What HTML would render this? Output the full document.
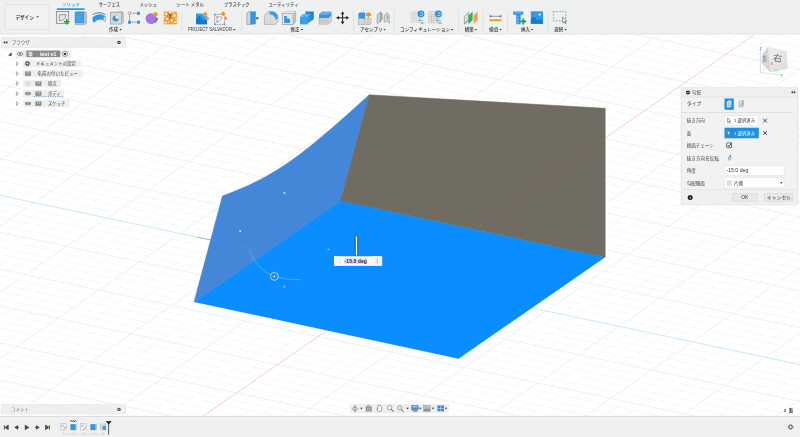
<!DOCTYPE html>
<html lang="ja"><head><meta charset="utf-8"><title>Fusion</title>
<style>
html,body{margin:0;padding:0;background:#fff}
body{width:800px;height:437px;overflow:hidden;position:relative}
#wrap{position:absolute;left:0;top:0;width:800px;height:437px;will-change:transform}
svg{position:absolute;left:0;top:0;font-family:'Liberation Sans','Noto Sans CJK JP',sans-serif}
</style></head><body>
<div id="wrap">
<svg width="800" height="437" viewBox="0 0 800 437">
<rect width="800" height="437" fill="#fff"/>
<g id="grid">
<path d="M0 -129.3L800 39.9M0 -121.9L800 47.3M0 -114.6L800 54.6M0 -107.2L800 62.0M0 -92.4L800 76.8M0 -85.0L800 84.2M0 -77.7L800 91.5M0 -70.3L800 98.9M0 -55.5L800 113.7M0 -48.1L800 121.1M0 -40.8L800 128.4M0 -33.4L800 135.8M0 -18.6L800 150.6M0 -11.2L800 158.0M0 -3.9L800 165.3M0 3.5L800 172.7M0 18.3L800 187.5M0 25.7L800 194.9M0 33.0L800 202.2M0 40.4L800 209.6M0 55.2L800 224.4M0 62.6L800 231.8M0 69.9L800 239.1M0 77.3L800 246.5M0 92.1L800 261.3M0 99.5L800 268.7M0 106.8L800 276.0M0 114.2L800 283.4M0 129.0L800 298.2M0 136.4L800 305.6M0 143.7L800 312.9M0 151.1L800 320.3M0 165.9L800 335.1M0 173.3L800 342.5M0 180.6L800 349.8M0 188.0L800 357.2M0 202.8L800 372.0M0 210.2L800 379.4M0 217.5L800 386.7M0 224.9L800 394.1M0 239.7L800 408.9M0 247.1L800 416.3M0 254.4L800 423.6M0 261.8L800 431.0M0 276.6L800 445.8M0 284.0L800 453.2M0 291.3L800 460.5M0 298.7L800 467.9M0 313.5L800 482.7M0 320.9L800 490.1M0 328.2L800 497.4M0 335.6L800 504.8M0 350.4L800 519.6M0 357.8L800 527.0M0 365.1L800 534.3M0 372.5L800 541.7M0 387.3L800 556.5M0 394.7L800 563.9M0 402.0L800 571.2M0 409.4L800 578.6M-541.7 416L16.1 30M-522.6 416L35.2 30M-503.5 416L54.3 30M-484.4 416L73.4 30M-446.2 416L111.6 30M-427.1 416L130.7 30M-408.0 416L149.8 30M-388.9 416L168.9 30M-350.7 416L207.1 30M-331.6 416L226.2 30M-312.5 416L245.3 30M-293.4 416L264.4 30M-255.2 416L302.6 30M-236.1 416L321.7 30M-217.0 416L340.8 30M-197.9 416L359.9 30M-159.7 416L398.1 30M-140.6 416L417.2 30M-121.5 416L436.3 30M-102.4 416L455.4 30M-64.2 416L493.6 30M-45.1 416L512.7 30M-26.0 416L531.8 30M-6.9 416L550.9 30M31.3 416L589.1 30M50.4 416L608.2 30M69.5 416L627.3 30M88.6 416L646.4 30M126.8 416L684.6 30M145.9 416L703.7 30M165.0 416L722.8 30M184.1 416L741.9 30M222.3 416L780.1 30M241.4 416L799.2 30M260.5 416L818.3 30M279.6 416L837.4 30M317.8 416L875.6 30M336.9 416L894.7 30M356.0 416L913.8 30M375.1 416L932.9 30M413.3 416L971.1 30M432.4 416L990.2 30M451.5 416L1009.3 30M470.6 416L1028.4 30M508.8 416L1066.6 30M527.9 416L1085.7 30M547.0 416L1104.8 30M566.1 416L1123.9 30M604.3 416L1162.1 30M623.4 416L1181.2 30M642.5 416L1200.3 30M661.6 416L1219.4 30M699.8 416L1257.6 30M718.9 416L1276.7 30M738.0 416L1295.8 30M757.1 416L1314.9 30M795.3 416L1353.1 30" stroke="#f5f5f5" stroke-width="0.7" fill="none"/>
<path d="M0 -136.7L800 32.5M0 -99.8L800 69.4M0 -62.9L800 106.3M0 -26.0L800 143.2M0 10.9L800 180.1M0 47.8L800 217.0M0 84.7L800 253.9M0 121.6L800 290.8M0 158.5L800 327.7M0 232.3L800 401.5M0 269.2L800 438.4M0 306.1L800 475.3M0 343.0L800 512.2M0 379.9L800 549.1M0 416.8L800 586.0M-465.3 416L92.5 30M-369.8 416L188.0 30M-274.3 416L283.5 30M-178.8 416L379.0 30M-83.3 416L474.5 30M12.2 416L570.0 30M107.7 416L665.5 30M298.7 416L856.5 30M394.2 416L952.0 30M489.7 416L1047.5 30M585.2 416L1143.0 30M680.7 416L1238.5 30M776.2 416L1334.0 30" stroke="#ececec" stroke-width="0.8" fill="none"/>
<path d="M0 195.4L800 364.6" stroke="#b9efc0" stroke-width="0.8" fill="none"/>
<path d="M203.2 416L753.8 35" stroke="#f7c2c2" stroke-width="0.8" fill="none"/>
</g>
<g id="model">

<polygon points="194,302 458.6,358.7 605.2,257.2 340.5,200.8" fill="#0a8dff"/>
<polygon points="194.6,301.5 340.5,200.8 604.6,257 604.6,250 340.5,195 200,290" fill="#0a8dff"/>
<path d="M194 302L222.4 196C276.3 176.2 301.7 156.2 369.2 94.8L340.5 200.8Z" fill="#4487d9" stroke="#4487d9" stroke-width="0.5" stroke-linejoin="round"/>
<polygon points="369.2,94.8 605.2,108.3 605.2,257.2 340.5,200.8" fill="#706c61" stroke="#706c61" stroke-width="0.5" stroke-linejoin="round"/>
<path d="M474.4 229.3L605.2 138.8" stroke="#8c7266" stroke-width="0.6" fill="none"/>
<path d="M197 237.1L266 251.7" stroke="#5391e0" stroke-width="0.5" fill="none"/>
<!-- manipulators -->
<path d="M249.2 249.5Q256.5 270.5 274.3 276.4Q288 280.6 300.7 279.6" stroke="#8fbdf0" stroke-width="0.5" fill="none"/>
<circle cx="274.4" cy="276.4" r="3.9" fill="#1580dc" stroke="#dcecfb" stroke-width="0.8"/>
<circle cx="274.4" cy="276.4" r="2.4" fill="#1d94f2"/>
<circle cx="274.4" cy="276.4" r="0.8" fill="#fff"/>
<rect x="283.6" y="192.2" width="1.6" height="1.6" fill="#dfe8f2"/>
<rect x="239.4" y="230.4" width="1.6" height="1.6" fill="#dfe8f2"/>
<rect x="327.6" y="248.4" width="2" height="1.2" fill="#9cc3ee" transform="rotate(25 328 249)"/>
<rect x="283.8" y="285.6" width="1" height="2" fill="#dfe8f2"/>
<path d="M355.3 256V237Q356.5 234.6 357.7 237V256Z" fill="#fff" stroke="#222" stroke-width="0.7"/>
<rect x="334.1" y="256.3" width="48" height="9.5" fill="#fff"/>
<rect x="334.1" y="256.3" width="7" height="9.5" fill="#f1f1f1"/><rect x="371.4" y="256.3" width="10.7" height="9.5" fill="#f3f3f3"/>
<path d="M336 256.4v9.3M338.4 256.4v9.3M373.6 256.4v9.3" stroke="#fff" stroke-width="0.7"/>
<path d="M334.1 257.1H382.1M334.1 264.9H382.1" stroke="#f6d5dc" stroke-width="0.4" stroke-dasharray="0.8 0.8"/>
<rect x="344.2" y="258.3" width="23.2" height="5.6" fill="#e2d6f6"/>
<text x="344.6" y="262.8" font-size="5" font-weight="bold" fill="#2d2838" textLength="22.4" lengthAdjust="spacingAndGlyphs">-15.0 deg</text>
<path d="M377.3 258.6v0.9M377.3 260.4v0.9M377.3 262.2v0.9" stroke="#666" stroke-width="0.7"/>

</g>
<g id="viewcube">
<g>
<defs><linearGradient id="cg" x1="0" y1="0" x2="1" y2="1"><stop offset="0" stop-color="#efefef"/><stop offset="1" stop-color="#dcdcdc"/></linearGradient></defs>
<path d="M768.3 46.4L786.9 51.2L787.4 68.9L770.8 72.6Z" fill="url(#cg)"/>
<path d="M768.3 46.4L770.8 72.6L761.6 63.6L762 54.4Z" fill="#d6d6d6"/>
<path d="M768.3 46.4L770.8 72.6" stroke="#ececec" stroke-width="0.5"/>
<text x="773.2" y="61.4" font-size="9" fill="#6a6a6a" transform="rotate(8 778 58)">右</text>
<text x="762.6" y="61.4" font-size="7" fill="#7a7a7a" transform="translate(763,0) scale(0.55,1) translate(-763,0)">前</text>
<text x="774.5" y="71.8" font-size="3" fill="#b0b0b0" transform="rotate(-10 777 70)">下</text>
<path d="M760.4 72.4V49.8" stroke="#a8c0f2" stroke-width="0.55"/>
<path d="M760.4 72.6L781 74.8" stroke="#a5e3ad" stroke-width="0.55"/>
<path d="M760.4 72.4L771 64.8" stroke="#f3a5a5" stroke-width="0.6" stroke-dasharray="0.8 0.8"/>
<text x="759.6" y="49.8" font-size="3.6" font-weight="bold" fill="#4b78e8">Z</text>
<text x="780.4" y="77" font-size="3.6" font-weight="bold" fill="#3cc259">Y</text>
<text x="770.4" y="65.4" font-size="3.6" font-weight="bold" fill="#f06a6a">X</text>
</g>
</g>
<g id="toolbar">
<rect x="0" y="0" width="800" height="32.8" fill="#eff0f0"/>
<rect x="0" y="32.8" width="800" height="1.2" fill="#e7e8e8"/>
<rect x="0" y="34" width="800" height="0.7" fill="#edeeee"/>
<rect x="4.7" y="4.7" width="44.6" height="24.6" rx="1.6" fill="#f1f2f2" stroke="#d6d7d7" stroke-width="0.6"/>
<text x="15.50" y="18.60" font-size="5.00" fill="#333" font-weight="bold" textLength="18.25" lengthAdjust="spacingAndGlyphs">デザイン</text>
<path d="M36.15 16.16H38.85L37.50 17.84Z" fill="#444"/>
<text x="62.00" y="6.26" font-size="4.60" fill="#1e94e6" font-weight="500" textLength="18.00" lengthAdjust="spacingAndGlyphs">ソリッド</text>
<rect x="56.8" y="8.3" width="27.8" height="1.6" fill="#1e90e4"/>
<text x="98.70" y="6.26" font-size="4.60" fill="#484848" font-weight="500" textLength="21.30" lengthAdjust="spacingAndGlyphs">サーフェス</text>
<text x="139.50" y="6.26" font-size="4.60" fill="#484848" font-weight="500" textLength="17.50" lengthAdjust="spacingAndGlyphs">メッシュ</text>
<text x="176.50" y="6.26" font-size="4.60" fill="#484848" font-weight="500" textLength="27.50" lengthAdjust="spacingAndGlyphs">シート メタル</text>
<text x="224.00" y="6.26" font-size="4.60" fill="#484848" font-weight="500" textLength="25.50" lengthAdjust="spacingAndGlyphs">プラスチック</text>
<text x="268.50" y="6.26" font-size="4.60" fill="#484848" font-weight="500" textLength="30.00" lengthAdjust="spacingAndGlyphs">ユーティリティ</text>
<text x="109.00" y="31.18" font-size="4.40" fill="#2e2e2e" font-weight="500" textLength="9.00" lengthAdjust="spacingAndGlyphs">作成</text>
<path d="M119.35 28.93H121.85L120.60 30.47Z" fill="#333"/>
<text x="188.00" y="31.46" font-size="5.30" fill="#3a3a3a" font-weight="normal" textLength="44.00" lengthAdjust="spacingAndGlyphs">PROJECT SALVADOR</text>
<path d="M233.15 28.99H235.45L234.30 30.41Z" fill="#333"/>
<text x="290.50" y="31.18" font-size="4.40" fill="#2e2e2e" font-weight="500" textLength="9.00" lengthAdjust="spacingAndGlyphs">修正</text>
<path d="M300.75 28.93H303.25L302.00 30.47Z" fill="#333"/>
<text x="360.00" y="31.18" font-size="4.40" fill="#2e2e2e" font-weight="500" textLength="22.50" lengthAdjust="spacingAndGlyphs">アセンブリ</text>
<path d="M383.35 28.99H385.65L384.50 30.41Z" fill="#333"/>
<text x="400.00" y="31.18" font-size="4.40" fill="#2e2e2e" font-weight="500" textLength="50.10" lengthAdjust="spacingAndGlyphs">コンフィギュレーション</text>
<path d="M450.95 28.99H453.25L452.10 30.41Z" fill="#333"/>
<text x="464.75" y="31.18" font-size="4.40" fill="#2e2e2e" font-weight="500" textLength="9.00" lengthAdjust="spacingAndGlyphs">構築</text>
<path d="M474.65 29.02H476.85L475.75 30.38Z" fill="#333"/>
<text x="489.00" y="31.18" font-size="4.40" fill="#2e2e2e" font-weight="500" textLength="9.50" lengthAdjust="spacingAndGlyphs">検査</text>
<path d="M499.45 29.02H501.65L500.55 30.38Z" fill="#333"/>
<text x="521.00" y="31.18" font-size="4.40" fill="#2e2e2e" font-weight="500" textLength="9.00" lengthAdjust="spacingAndGlyphs">挿入</text>
<path d="M530.95 29.02H533.15L532.05 30.38Z" fill="#333"/>
<text x="554.25" y="31.18" font-size="4.40" fill="#2e2e2e" font-weight="500" textLength="9.00" lengthAdjust="spacingAndGlyphs">選択</text>
<path d="M564.45 28.96H566.85L565.65 30.44Z" fill="#333"/>
<rect x="181.5" y="11" width="0.7" height="20.5" fill="#dcdddd"/>
<rect x="241.5" y="11" width="0.7" height="20.5" fill="#dcdddd"/>
<rect x="353.4" y="11" width="0.7" height="20.5" fill="#dcdddd"/>
<rect x="393.8" y="11" width="0.7" height="20.5" fill="#dcdddd"/>
<rect x="458.0" y="11" width="0.7" height="20.5" fill="#dcdddd"/>
<rect x="482.8" y="11" width="0.7" height="20.5" fill="#dcdddd"/>
<rect x="507.3" y="11" width="0.7" height="20.5" fill="#dcdddd"/>
<rect x="547.8" y="11" width="0.7" height="20.5" fill="#dcdddd"/>

<!-- 1 create sketch -->
<g>
<rect x="56.5" y="11.6" width="12.2" height="11.8" fill="#f1f1f1" stroke="#7a7a7a" stroke-width="0.7"/>
<rect x="57.5" y="12.6" width="10.2" height="9.8" fill="none" stroke="#dcdcdc" stroke-width="0.5"/>
<path d="M59.3 14.7H66Q65.6 20.4 59.3 21Z" fill="#e6e6e6" stroke="#666" stroke-width="0.6"/>
<path d="M66.7 18.9v5.6M63.9 21.7h5.6" stroke="#12a73b" stroke-width="1.6"/>
</g>
<!-- 2 extrude -->
<g>
<path d="M76.5 11.8H85.5L86.4 12.8V23.2L84.5 24.6H75.2Z" fill="#bdbdbd" stroke="#777" stroke-width="0.4"/>
<rect x="74.8" y="11.8" width="9.2" height="11.2" fill="#2f97e6"/>
<rect x="76" y="13" width="7" height="9" fill="#4aa6ee" opacity="0.8"/>
</g>
<!-- 3 revolve -->
<g>
<path d="M92.5 14.6Q99 10.8 105.5 14.6" stroke="#555" stroke-width="0.8" fill="none"/>
<path d="M92.6 17.2Q99 11.8 105.6 16.6V21.4Q99 16.8 94 22.8L92.6 21Z" fill="#2f97e6"/>
<ellipse cx="104.6" cy="19.2" rx="1.2" ry="2.4" fill="#d8d8d8" stroke="#888" stroke-width="0.3"/>
</g>
<!-- 4 hole -->
<g>
<path d="M110.6 12.4L121.6 11.4L123.4 12.4V22.6L121.6 24H110.6Z" fill="#c4c4c4" stroke="#888" stroke-width="0.4"/>
<rect x="110.6" y="12.4" width="10.8" height="11.6" fill="#d9d9d9" stroke="#8a8a8a" stroke-width="0.4"/>
<circle cx="115.6" cy="18.6" r="3.3" fill="#f4f4f4" stroke="#999" stroke-width="0.3"/>
<path d="M115.6 18.6V15.6A3 3 0 1 0 118.6 18.6Z" fill="#2f97e6"/>
</g>
<!-- 5 pattern -->
<g>
<path d="M129.5 13.2H138.5M129.5 13.2V22.2H138.5" stroke="#6a6a6a" stroke-width="0.5" fill="none"/>
<circle cx="129.5" cy="13.2" r="1.3" fill="#fff" stroke="#555" stroke-width="0.5"/>
<rect x="137" y="11.8" width="3" height="3" fill="#2f9be8"/>
<rect x="128" y="20.7" width="3" height="3" fill="#2f9be8"/>
<rect x="137" y="20.7" width="3" height="3" fill="#2f9be8"/>
</g>
<!-- 6 purple -->
<g>
<circle cx="151" cy="18.6" r="5.4" fill="#a774e0"/>
<path d="M156.6 17.5L158.4 18.5L155.5 23L154.4 22.4Z" fill="#4a6fe0"/>
<path d="M155.4 11.6L158.2 14.6L155.4 17.6L152.6 14.6Z" fill="#f7941d"/>
</g>
<!-- 7 orange texture -->
<g>
<rect x="163.8" y="11.6" width="13.2" height="12.8" fill="#f7a23a"/>
<path d="M165 13h2v2h-2zM169 12h3v1.5h-3zM173.5 14h2v3h-2zM166 18h2.5v2h-2.5zM171 19h2v3h-2zM174.5 21h2v2h-2zM164.5 22h2v1.5h-2zM172.4 12.4h1.4v1h-1.4zM175.4 18h1.4v1.4h-1.4zM167.6 21.4h2v1.4h-2zM164.2 16h1.2v1.4h-1.2zM170.6 16.4h1.4v1.2h-1.4z" fill="#fdebd2"/>
<path d="M168.6 13.2l1.4 3l-1 3.2M171.4 13l-0.8 3.4l1.2 2" stroke="#5e5048" stroke-width="0.9" fill="none"/>
<path d="M166.4 15.6h1v1h-1zM173 20h1v1h-1zM169.4 22.6h1v1h-1z" fill="#8a6a4a"/>
</g>
<!-- 8 salvador image -->
<g>
<rect x="196" y="13.6" width="11" height="10.6" fill="#2f9be8"/>
<path d="M196 24.2V19.2L199.4 15.8L203.2 20.4L205 18.8L207 20.8V24.2Z" fill="#1478cf"/>
<path d="M205.20 11.20L206.32 12.88L208.00 14.00L206.32 15.12L205.20 16.80L204.08 15.12L202.40 14.00L204.08 12.88Z" fill="#f7941d" stroke="#f3f4f4" stroke-width="0.6" paint-order="stroke"/>
<path d="M207.60 16.30L208.44 17.56L209.70 18.40L208.44 19.24L207.60 20.50L206.76 19.24L205.50 18.40L206.76 17.56Z" fill="#f58a4a" stroke="#f3f4f4" stroke-width="0.6" paint-order="stroke"/>
<path d="M203 12.6L204 14.6" stroke="#eff0f0" stroke-width="0.1"/>
</g>
<!-- 9 salvador sketch -->
<g>
<rect x="214.8" y="14.4" width="9.6" height="9.8" fill="#f0f0f0" stroke="#8a8a8a" stroke-width="0.55"/>
<path d="M217 22V17H222Q221.5 21 217 22Z" fill="#f8f8f8" stroke="#777" stroke-width="0.5"/>
<rect x="214" y="13.8" width="1.6" height="1.6" fill="#2f9be8"/><rect x="214" y="23.4" width="1.6" height="1.6" fill="#2f9be8"/><rect x="223.6" y="23.4" width="1.6" height="1.6" fill="#2f9be8"/>
<rect x="216.6" y="16.4" width="1.2" height="1.2" fill="#2f9be8"/><rect x="216.6" y="21.2" width="1.2" height="1.2" fill="#2f9be8"/>
<path d="M223.20 11.00L224.32 12.68L226.00 13.80L224.32 14.92L223.20 16.60L222.08 14.92L220.40 13.80L222.08 12.68Z" fill="#f7941d" stroke="#f3f4f4" stroke-width="0.6" paint-order="stroke"/>
<path d="M225.60 16.30L226.44 17.56L227.70 18.40L226.44 19.24L225.60 20.50L224.76 19.24L223.50 18.40L224.76 17.56Z" fill="#f58a4a" stroke="#f3f4f4" stroke-width="0.6" paint-order="stroke"/>
</g>
<!-- 10 press pull -->
<g>
<path d="M246.8 13.4Q248 11.6 251 11.4V24.4H246.8Z" fill="#d6d6d6" stroke="#777" stroke-width="0.5"/>
<path d="M250.4 11.6H255.8V23.4L254.4 24.4H250.4Z" fill="#2f97e6"/>
<path d="M255.8 17.8H257L258.6 18.2L257 19.4Z" fill="#333"/>
<path d="M256.4 17.6H258.8L257.6 19.2Z" fill="#333"/>
</g>
<!-- 11 fillet -->
<g>
<path d="M264.4 15.4L267.8 11.6H272A6 6 0 0 1 278 17.6V21.4L275.2 24.4H264.4Z" fill="#dadada" stroke="#909090" stroke-width="0.5"/>
<path d="M269.8 11.6H272A6 6 0 0 1 278 17.6V18.6L275.4 19.8A5 5 0 0 0 270.4 14.6L269.2 14.4Z" fill="#3a9fea"/>
</g>
<!-- 12 shell -->
<g>
<path d="M282.4 13.6L285 11.4H295.6V22L293 24.4H282.4Z" fill="#c8c8c8" stroke="#8c8c8c" stroke-width="0.45"/>
<path d="M282.4 13.6L285 11.4H295.6L293 13.6Z" fill="#ececec"/>
<rect x="282.4" y="13.6" width="10.6" height="10.8" fill="#e6e6e6" stroke="#8c8c8c" stroke-width="0.45"/>
<path d="M284.2 16H286.8V18.8H290V23H284.2Z" fill="#2f97e6"/>
</g>
<!-- 13 combine -->
<g>
<path d="M305.4 11.6H313.8V19L311.8 20.8H305.4Z" fill="#1f86d8"/>
<path d="M302.6 14.2H310.6V21.6L308.6 23H302.6Z" fill="#2b92e2"/>
<path d="M300 16.8H308V24.4H300Z" fill="#3aa0ec"/>
<path d="M300 16.8L302.6 14.2H310.6L308 16.8Z" fill="#62b6f4"/>
</g>
<!-- 14 offset face -->
<g>
<path d="M319 14.2L322 11.4H331.4L328.6 14.2Z" fill="#5ab2f3"/>
<path d="M319 14.2H328.6L331.4 11.4V15.2L328.6 18H319Z" fill="#2f97e6"/>
<path d="M319 18H328.6L331.4 15.4V21.2L328.6 24.2H319Z" fill="#d6d6d6" stroke="#888" stroke-width="0.4"/>
<path d="M319 20H328.6M319 22H328.6" stroke="#999" stroke-width="0.4"/>
</g>
<!-- 15 move -->
<g fill="#222" stroke="#222">
<path d="M342.6 13V22.6M337.8 17.8H347.4" stroke-width="1" fill="none"/>
<path d="M342.6 11.2L344.4 14.2H340.8ZM342.6 24.4L344.4 21.4H340.8ZM336 17.8L339 16V19.6ZM349.2 17.8L346.2 16V19.6Z" stroke="none"/>
</g>
<!-- 16 new component -->
<g>
<path d="M358.4 18.4H371V23.8L370 24.6H358.4Z" fill="#d6d6d6" stroke="#888" stroke-width="0.4"/>
<path d="M364.4 18.4V24.4M368 18.4V24.4" stroke="#999" stroke-width="0.4"/>
<path d="M358.4 13.6L359.6 12.6H365.2V18.4H358.4Z" fill="#2f97e6"/>
<circle cx="368.4" cy="14.6" r="2.1" fill="#f7941d" stroke="#f3f4f4" stroke-width="0.5"/><path d="M368.4 11.4L369.2 13.4L371.2 12.6L370.4 14.6L371.6 15.8L369.6 16L368.4 17.8L367.2 16L365.2 15.8L366.4 14.6L365.6 12.6L367.6 13.4Z" fill="#f7941d"/>
</g>
<!-- 17 joint -->
<g>
<path d="M377.2 14.8L380.6 12V21.6L377.2 23.4Z" fill="#cfcfcf" stroke="#777" stroke-width="0.5"/>
<path d="M380.6 12L382.4 13.6V19L380.6 21.6Z" fill="#b5b5b5" stroke="#777" stroke-width="0.4"/>
<path d="M384.2 16L386.8 12.6L389.2 15.4V23.2L386.4 20.6L384.2 22.4Z" fill="#d9d9d9" stroke="#777" stroke-width="0.5"/>
<path d="M386.8 14.6L388 16V19.4L386.8 18.2Z" fill="#6ab2ea"/>
</g>
<!-- 18 config -->
<g>
<path d="M410.8 13L412.6 11.4H420.8V22.4H410.8Z" fill="#dedede" stroke="#cfcfcf" stroke-width="0.3"/>
<circle cx="421" cy="14" r="3.4" fill="#1f93e6"/>
<path d="M419.6 14.6A1.6 1.6 0 1 0 421.4 12.6M421.4 12.6l-0.9-0.5M421.4 12.6l-0.5 0.9" stroke="#fff" stroke-width="0.6" fill="none"/>
<path d="M418.6 20.4H423.4M420 23H424.4M422.2 21.8V24.2" stroke="#777" stroke-width="0.5"/>
<rect x="419" y="19.8" width="1.2" height="1.2" fill="#4aa6ee"/>
</g>
<!-- 19 config table -->
<g>
<rect x="428.8" y="11.4" width="10.2" height="11.6" fill="#e4e4e4" stroke="#b8b8b8" stroke-width="0.4"/>
<path d="M428.8 14H439M428.8 16.4H439M428.8 18.8H439M428.8 21H439M431.4 14V23M434 14V23M436.6 14V23" stroke="#b0b0b0" stroke-width="0.4"/>
<circle cx="438.4" cy="14" r="3.4" fill="#1f93e6"/>
<path d="M437 14.6A1.6 1.6 0 1 0 438.8 12.6M438.8 12.6l-0.9-0.5M438.8 12.6l-0.5 0.9" stroke="#fff" stroke-width="0.6" fill="none"/>
<path d="M436.4 20.4H441.2M437.8 23H442.2M440 21.8V24.2" stroke="#777" stroke-width="0.5"/>
<rect x="436.8" y="19.8" width="1.2" height="1.2" fill="#4aa6ee"/>
</g>
<!-- 20 construct -->
<g>
<path d="M464.4 16.6L468.4 12V20.4L464.4 24Z" fill="#e0e0e0" stroke="#777" stroke-width="0.5"/>
<path d="M468.4 15.4L472.6 11.4V20.2L468.4 24.2Z" fill="#2fb457"/>
<path d="M473.6 15.4L477.6 11.6V20L473.6 23.8Z" fill="#f59a4a"/>
<path d="M464.4 24L468.4 20.4" stroke="#555" stroke-width="0.6"/>
</g>
<!-- 21 inspect -->
<g>
<path d="M490 16.3H501M490 14.6V18M501 14.6V18" stroke="#666" stroke-width="0.6" fill="none"/>
<path d="M489.8 16.3L491.6 15.5V17.1ZM501.2 16.3L499.4 15.5V17.1Z" fill="#555"/>
<rect x="489.6" y="17.8" width="11.8" height="1.6" fill="#fafafa"/>
<rect x="489.6" y="19.2" width="11.8" height="2.3" fill="#f7941d"/>
<rect x="489.6" y="21.5" width="11.8" height="0.8" fill="#fdfdfd"/>
</g>
<!-- 22 insert derive -->
<g>
<path d="M513.2 11.4H523.2V14.8H520.6V24.2H516.2V14.8H513.2Z" fill="#2f97e6"/>
<path d="M517 16h1.2v1.2h-1.2zM517 19h1.2v1.2h-1.2zM517 22h1.2v1.2h-1.2zM515 12.4h6v0.8h-6z" fill="#8ccbf7"/>
<path d="M523.3 18.4V24.4M520.3 21.4H526.3" stroke="#13a538" stroke-width="1.8"/>
</g>
<!-- 23 insert image -->
<g>
<rect x="530.8" y="11.3" width="12.2" height="12.5" fill="#2f9be8"/>
<path d="M530.8 23.8V19.8L534.2 16.6L537.6 20.6L539.6 18.8L543 21.6V23.8Z" fill="#1478cf"/>
<circle cx="539.6" cy="14.6" r="1.2" fill="#d6ecfb"/>
</g>
<!-- 24 select -->
<g>
<rect x="553.4" y="11.6" width="12.4" height="9.2" fill="none" stroke="#43b649" stroke-width="0.8" stroke-dasharray="1.6 1.4"/>
<path d="M562.6 17.2L566.8 21L565 21.2L566 23.4L565.2 23.8L564.2 21.6L562.8 22.8Z" fill="#fff" stroke="#333" stroke-width="0.5"/>
</g>

</g>
<g id="browser">
<rect x="1.2" y="37.2" width="124.4" height="10.4" fill="#eeefef" stroke="#e2e2e2" stroke-width="0.5"/>
<path d="M5.2 41L3.3 42.4L5.2 43.8ZM7.4 41L5.5 42.4L7.4 43.8Z" fill="#2a2a2a"/>
<text x="11.80" y="43.96" font-size="4.60" fill="#5a5a5a" font-weight="normal" textLength="18.00" lengthAdjust="spacingAndGlyphs">ブラウザ</text>
<circle cx="119" cy="42.4" r="1.7" fill="#333"/><rect x="118" y="42.1" width="2" height="0.6" fill="#eee"/>
<rect x="15.8" y="50.3" width="55" height="7.3" fill="#ececec"/>
<path d="M11.6 52.2V55.8H8.2Z" fill="#333"/>
<ellipse cx="20.2" cy="53.9" rx="2.8" ry="1.6" fill="#f2f2f2" stroke="#5c5c5c" stroke-width="0.6"/><circle cx="20.2" cy="53.9" r="0.9" fill="#5c5c5c"/>
<rect x="26.4" y="50.6" width="33.8" height="6.5" fill="#8b8b8b"/>
<path d="M28.4 51.4H31.6L32.6 52.4V56.4H28.4Z" fill="#dfe6ee" stroke="#6a7686" stroke-width="0.4"/><path d="M29.4 55L31.6 52.6" stroke="#5b9bd8" stroke-width="0.6"/>
<text x="40.00" y="55.58" font-size="4.80" fill="#fff" font-weight="bold" textLength="16.25" lengthAdjust="spacingAndGlyphs">test v1</text>
<circle cx="65" cy="53.9" r="2.5" fill="#fafafa" stroke="#555" stroke-width="0.6"/><circle cx="65" cy="53.9" r="1.2" fill="#333"/>
<rect x="23.1" y="60.0" width="57.7" height="7.2" fill="#eeefef"/>
<path d="M16.4 61.7L18.6 63.6L16.4 65.5Z" fill="#fafafa" stroke="#666" stroke-width="0.5"/>
<circle cx="27.5" cy="63.6" r="1.55" fill="#fafafa" stroke="#444" stroke-width="1.1"/>
<circle cx="27.5" cy="63.6" r="2.3" fill="none" stroke="#444" stroke-width="0.8" stroke-dasharray="0.9 0.906"/>
<text x="36.00" y="65.26" font-size="4.60" fill="#404040" font-weight="normal" textLength="40.00" lengthAdjust="spacingAndGlyphs">ドキュメントの設定</text>
<rect x="23.1" y="70.0" width="59.5" height="7.2" fill="#eeefef"/>
<path d="M16.4 71.7L18.6 73.6L16.4 75.5Z" fill="#fafafa" stroke="#666" stroke-width="0.5"/>
<rect x="25.0" y="71.4" width="6" height="4.4" fill="#8a8a8a"/><rect x="26.7" y="71.4" width="0.6" height="2.6" fill="#e4e4e4"/><rect x="28.8" y="71.4" width="0.6" height="2.6" fill="#e4e4e4"/>
<text x="37.40" y="75.26" font-size="4.60" fill="#404040" font-weight="normal" textLength="40.70" lengthAdjust="spacingAndGlyphs">名前の付いたビュー</text>
<rect x="23.1" y="80.0" width="37.9" height="7.2" fill="#eeefef"/>
<path d="M16.4 81.7L18.6 83.6L16.4 85.5Z" fill="#fafafa" stroke="#666" stroke-width="0.5"/>
<ellipse cx="28.0" cy="83.6" rx="2.9" ry="1.6" fill="#f4f4f4" stroke="#bdbdbd" stroke-width="0.5"/><circle cx="28.0" cy="83.6" r="1" fill="none" stroke="#bdbdbd" stroke-width="0.5"/>
<rect x="35.4" y="81.4" width="6" height="4.4" fill="#8a8a8a"/><rect x="37.1" y="81.4" width="0.6" height="2.6" fill="#e4e4e4"/><rect x="39.2" y="81.4" width="0.6" height="2.6" fill="#e4e4e4"/>
<text x="47.90" y="85.26" font-size="4.60" fill="#404040" font-weight="normal" textLength="8.90" lengthAdjust="spacingAndGlyphs">原点</text>
<rect x="23.1" y="90.0" width="41.1" height="7.2" fill="#eeefef"/>
<path d="M16.4 91.7L18.6 93.6L16.4 95.5Z" fill="#fafafa" stroke="#666" stroke-width="0.5"/>
<ellipse cx="28.0" cy="93.6" rx="3.1" ry="1.75" fill="#8c8c8c"/><circle cx="28.0" cy="93.6" r="1.05" fill="none" stroke="#c9c9c9" stroke-width="0.45"/>
<rect x="35.4" y="91.4" width="6" height="4.4" fill="#8a8a8a"/><rect x="37.1" y="91.4" width="0.6" height="2.6" fill="#e4e4e4"/><rect x="39.2" y="91.4" width="0.6" height="2.6" fill="#e4e4e4"/>
<text x="47.90" y="95.26" font-size="4.60" fill="#404040" font-weight="normal" textLength="12.70" lengthAdjust="spacingAndGlyphs">ボディ</text>
<rect x="23.1" y="100.0" width="46.4" height="7.2" fill="#eeefef"/>
<path d="M16.4 101.7L18.6 103.6L16.4 105.5Z" fill="#fafafa" stroke="#666" stroke-width="0.5"/>
<ellipse cx="28.0" cy="103.6" rx="3.1" ry="1.75" fill="#8c8c8c"/><circle cx="28.0" cy="103.6" r="1.05" fill="none" stroke="#c9c9c9" stroke-width="0.45"/>
<rect x="35.4" y="101.4" width="6" height="4.4" fill="#8a8a8a"/><rect x="37.1" y="101.4" width="0.6" height="2.6" fill="#e4e4e4"/><rect x="39.2" y="101.4" width="0.6" height="2.6" fill="#e4e4e4"/>
<text x="47.90" y="105.26" font-size="4.60" fill="#404040" font-weight="normal" textLength="17.50" lengthAdjust="spacingAndGlyphs">スケッチ</text>
<path d="M33.8 96.6H63" stroke="#3566c4" stroke-width="0.7" stroke-dasharray="1 1.35"/>
</g>
<g id="dialog">
<rect x="680.8" y="88" width="117.6" height="117.6" fill="#000" opacity="0.04"/>
<rect x="681.2" y="87.2" width="116.2" height="116.9" fill="#f2f2f2" stroke="#dcdcdc" stroke-width="0.6"/>
<rect x="681.5" y="87.5" width="115.6" height="9.4" fill="#eeefef"/>
<rect x="681.5" y="96.6" width="115.6" height="0.8" fill="#e2e2e2"/>
<rect x="681.5" y="189.6" width="115.6" height="14.2" fill="#f0f0f0"/>
<rect x="681.5" y="189.4" width="115.6" height="0.6" fill="#dedede"/>
<circle cx="688" cy="92.4" r="2" fill="#1d2430"/><rect x="686.9" y="92.1" width="2.2" height="0.6" fill="#eee"/>
<text x="691.80" y="93.96" font-size="4.60" fill="#444" font-weight="normal" textLength="9.20" lengthAdjust="spacingAndGlyphs">勾配</text>
<path d="M792 90.6L793.8 92L792 93.4ZM794.2 90.6L796 92L794.2 93.4Z" fill="#222" transform="translate(-0.3,0.3)"/>
<text x="687.00" y="105.36" font-size="4.60" fill="#333" font-weight="normal" textLength="14.20" lengthAdjust="spacingAndGlyphs">タイプ</text>
<rect x="724.5" y="98.5" width="9.3" height="11.3" fill="#1e90e4"/>
<path d="M726.8 101.4L728.6 100.4H731.4V106.4L729.6 107.6H726.8Z" fill="#cfe6fa"/><path d="M728.8 102.4L731 104.4L729.8 104.6L730.4 106L729.8 106.2L729.2 104.9L728.6 105.6Z" fill="#fff" stroke="#1a5ea8" stroke-width="0.3"/>
<path d="M739 101.6L740.4 100.6H743.4L742.4 101.6V107H739Z" fill="#e4e4e4" stroke="#777" stroke-width="0.4"/><path d="M743.4 100.6V105.6L742.4 107" stroke="#777" stroke-width="0.4" fill="none"/><path d="M740.6 105.4L742.8 102.4" stroke="#2f97e6" stroke-width="0.7"/>
<rect x="682" y="112" width="110" height="0.6" fill="#d4d4d4"/>
<text x="686.80" y="122.16" font-size="4.60" fill="#333" font-weight="normal" textLength="18.00" lengthAdjust="spacingAndGlyphs">抜き方向</text>
<rect x="724.5" y="115.4" width="34" height="10.2" fill="#fff" stroke="#d8d8d8" stroke-width="0.4"/>
<path d="M727.6 118L730.8 121L729.4 121.2L730.2 123L729.5 123.3L728.7 121.6L727.6 122.6Z" fill="#fff" stroke="#333" stroke-width="0.45"/>
<text x="734.00" y="122.08" font-size="4.40" fill="#333" font-weight="normal" textLength="21.00" lengthAdjust="spacingAndGlyphs">1 選択済み</text>
<path d="M763.3 118.8L766.9 122.4M766.9 118.8L763.3 122.4" stroke="#2a2a2a" stroke-width="0.85"/>
<text x="686.80" y="134.66" font-size="4.60" fill="#333" font-weight="normal" textLength="4.40" lengthAdjust="spacingAndGlyphs">面</text>
<rect x="724.5" y="127.7" width="34.3" height="10.6" fill="#1e90e4"/>
<path d="M727.6 130.4L730.8 133.4L729.4 133.6L730.2 135.4L729.5 135.7L728.7 134L727.6 135Z" fill="#fff" stroke="#244" stroke-width="0.35"/>
<text x="734.00" y="134.58" font-size="4.40" fill="#fff" font-weight="normal" textLength="21.00" lengthAdjust="spacingAndGlyphs">1 選択済み</text>
<path d="M763.3 131.2L766.9 134.8M766.9 131.2L763.3 134.8" stroke="#2a2a2a" stroke-width="0.85"/>
<text x="686.75" y="147.06" font-size="4.60" fill="#333" font-weight="normal" textLength="27.00" lengthAdjust="spacingAndGlyphs">接面チェーン</text>
<rect x="726.7" y="142.9" width="4.8" height="4.8" rx="0.6" fill="#fff" stroke="#333" stroke-width="0.7"/><path d="M727.8 145.2L728.9 146.5L731.6 142.8" stroke="#222" stroke-width="0.9" fill="none"/>
<text x="686.75" y="159.86" font-size="4.60" fill="#333" font-weight="normal" textLength="32.25" lengthAdjust="spacingAndGlyphs">抜き方向を反転</text>
<path d="M730.4 155.4L728.6 158.4" stroke="#777" stroke-width="0.5"/><path d="M729 160.6Q727.6 158.6 729.2 156.6M730.4 156Q731.8 158 730.2 160" stroke="#2f97e6" stroke-width="0.7" fill="none"/><path d="M729.8 154.6L731.2 155.2L730 156.2Z" fill="#555"/>
<text x="686.75" y="172.16" font-size="4.60" fill="#333" font-weight="normal" textLength="9.00" lengthAdjust="spacingAndGlyphs">角度</text>
<rect x="724.5" y="166" width="59.5" height="9.2" fill="#fff" stroke="#dcdcdc" stroke-width="0.4"/>
<text x="726.50" y="172.28" font-size="4.80" fill="#333" font-weight="normal" textLength="21.75" lengthAdjust="spacingAndGlyphs">-15.0 deg</text>
<text x="686.75" y="184.66" font-size="4.60" fill="#333" font-weight="normal" textLength="18.00" lengthAdjust="spacingAndGlyphs">勾配側面</text>
<rect x="724.5" y="177.8" width="59.5" height="10" fill="#fff" stroke="#dcdcdc" stroke-width="0.4"/>
<path d="M726.6 180.4H730.6L731.8 181.6V185.8H726.6Z" fill="#dcdcdc"/><path d="M730.6 180.4L731.8 181.6" stroke="#8cc3f0" stroke-width="0.5"/>
<text x="734.00" y="184.66" font-size="4.60" fill="#333" font-weight="normal" textLength="9.00" lengthAdjust="spacingAndGlyphs">片側</text>
<path d="M779.95 182.16H782.65L781.30 183.84Z" fill="#222"/>
<circle cx="690.2" cy="197.5" r="2.5" fill="#1d1d1d"/><rect x="689.85" y="197" width="0.7" height="1.8" fill="#eee"/><rect x="689.85" y="195.9" width="0.7" height="0.6" fill="#eee"/>
<rect x="732.2" y="193.7" width="25" height="7.6" rx="0.8" fill="#e9e9e9" stroke="#c9c9c9" stroke-width="0.5"/>
<text x="741.20" y="199.18" font-size="4.80" fill="#333" font-weight="normal" textLength="7.10" lengthAdjust="spacingAndGlyphs">OK</text>
<rect x="764.7" y="193.7" width="28.1" height="7.6" rx="0.8" fill="#e9e9e9" stroke="#c9c9c9" stroke-width="0.5"/>
<text x="767.00" y="199.23" font-size="4.80" fill="#333" font-weight="normal" textLength="24.00" lengthAdjust="spacingAndGlyphs">キャンセル</text>
</g>
<g id="bottom">
<rect x="1.2" y="404.4" width="124.4" height="9.6" fill="#eeefef" stroke="#e2e2e2" stroke-width="0.5"/>
<text x="11.00" y="410.78" font-size="4.40" fill="#777" font-weight="normal" textLength="18.00" lengthAdjust="spacingAndGlyphs">コメント</text>
<circle cx="119" cy="409.4" r="1.7" fill="#333"/><path d="M118 409.4H120M119 408.4V410.4" stroke="#eee" stroke-width="0.5"/>
<rect x="350.4" y="404" width="98.6" height="9.2" fill="#eeefef"/>
<ellipse cx="355" cy="408.8" rx="3" ry="1.2" fill="none" stroke="#777" stroke-width="0.6"/><path d="M355 406.1V411.3" stroke="#777" stroke-width="0.6"/><path d="M355 405.1l1.2 1.4h-2.4zM355 412.1l1.2 -1.4h-2.4z" fill="#777"/>
<path d="M360.15 407.73H362.65L361.40 409.27Z" fill="#222"/>
<rect x="366" y="407.1" width="5.4" height="4" fill="#999" stroke="#666" stroke-width="0.4"/><path d="M366 407.1L367.4 405.5H370L371.4 407.1" fill="#bbb" stroke="#666" stroke-width="0.4"/><path d="M367.6 407.7v3M369.6 407.7v3" stroke="#ddd" stroke-width="0.5"/>
<path d="M377.6 409.1V406.9Q377.6 406.1 378.4 406.1V405.5H379.2V405.3H380V405.5H380.8V406.1Q381.8 406.5 381.8 408.1Q382 410.9 380.6 411.5H378.6Q377 410.7 376.8 408.9Z" fill="#fafafa" stroke="#555" stroke-width="0.5"/>
<circle cx="389.6" cy="407.7" r="2.2" fill="#fafafa" stroke="#777" stroke-width="0.6"/><path d="M391.2 409.4L393.4 411.5" stroke="#333" stroke-width="1"/>
<circle cx="399.8" cy="407.9" r="2.2" fill="#e6e6e6" stroke="#777" stroke-width="0.6"/><path d="M401.4 409.6L403.6 411.7" stroke="#555" stroke-width="1"/>
<path d="M406.35 407.73H408.85L407.60 409.27Z" fill="#222"/>
<rect x="411.6" y="405.3" width="6.6" height="4.8" fill="#4b8fe0" stroke="#6b7f99" stroke-width="0.4"/><rect x="412.6" y="405.9" width="4.6" height="1.6" fill="#9cc5f3"/><path d="M413.4 410.2H416.6L417.4 411.7H412.6Z" fill="#888"/>
<path d="M418.95 407.73H421.45L420.20 409.27Z" fill="#222"/>
<rect x="423.6" y="405.5" width="6.6" height="5.8" fill="#b9bcc0" stroke="#888" stroke-width="0.4"/><path d="M423.8 409.9L426 408.1L427.8 409.5L430 408.3V411.3H423.8Z" fill="#8d9298"/>
<path d="M431.75 407.73H434.25L433.00 409.27Z" fill="#222"/>
<rect x="437.4" y="405.5" width="6.6" height="5.8" fill="#3d82d8"/><path d="M440.7 405.5V411.3M437.4 408.4H444" stroke="#dfeaf8" stroke-width="0.6"/>
<path d="M444.75 407.73H447.25L446.00 409.27Z" fill="#222"/>
<text x="784.00" y="412.20" font-size="4.00" fill="#333" font-weight="bold" textLength="2.20" lengthAdjust="spacingAndGlyphs">2</text>
<text x="788.80" y="412.31" font-size="4.20" fill="#333" font-weight="bold" textLength="4.20" lengthAdjust="spacingAndGlyphs">面</text>
<rect x="0" y="415.9" width="800" height="1.3" fill="#dbdcdc"/>
<rect x="0" y="417.2" width="800" height="19.8" fill="#eff0f0"/>
<path d="M4.4 425.2V429.6M8.2 425.2L5 427.4L8.2 429.6Z" stroke="#4a4a4a" stroke-width="0.9" fill="#4a4a4a"/>
<path d="M18 425.0L14.2 427.4L18 429.8Z" fill="#4a4a4a"/><rect x="17.4" y="426.9" width="1.8" height="0.9" fill="#4a4a4a"/>
<path d="M24.8 424.5L29.4 427.4L24.8 430.3Z" fill="#4a4a4a"/>
<path d="M36 425.0L39.8 427.4L36 429.8Z" fill="#4a4a4a"/><rect x="34.8" y="426.9" width="1.8" height="0.9" fill="#4a4a4a"/>
<path d="M49.4 425.2V429.6M45.6 425.2L48.8 427.4L45.6 429.6Z" stroke="#4a4a4a" stroke-width="0.9" fill="#4a4a4a"/>
<rect x="60.2" y="423.8" width="6.4" height="6.2" fill="#eef3f8" stroke="#9ab0c8" stroke-width="0.4"/><path d="M61.2 425.2h3M61.2 426.6h2" stroke="#5b9bd8" stroke-width="0.5"/><path d="M63.6 429.6L66.2 426.4" stroke="#f08030" stroke-width="0.9"/>
<path d="M71.0 424.2H76.0L77.0 423.6V429.2L76.0 430.2H71.0Z" fill="#b8c4d0"/><rect x="70.4" y="424.2" width="5" height="5.8" fill="#2f97e6"/>
<rect x="80.2" y="423.8" width="6.4" height="6.2" fill="#eef3f8" stroke="#9ab0c8" stroke-width="0.4"/><path d="M81.2 425.2h3M81.2 426.6h2" stroke="#5b9bd8" stroke-width="0.5"/><path d="M83.6 429.6L86.2 426.4" stroke="#f08030" stroke-width="0.9"/>
<path d="M91.0 424.2H96.0L97.0 423.6V429.2L96.0 430.2H91.0Z" fill="#b8c4d0"/><rect x="90.4" y="424.2" width="5" height="5.8" fill="#2f97e6"/>
<rect x="100.2" y="424" width="5.6" height="6" fill="#dcdcdc" stroke="#aaa" stroke-width="0.4"/><path d="M103 427L105.8 425.4V430H103.4Z" fill="#2f97e6"/><circle cx="103.8" cy="427.6" r="1.6" fill="#3a9ae8"/>
<path d="M70.4 421.8l1-1.5l1 1.5l1-1.5l1 1.5l1-1.5l1 1.5" stroke="#222" stroke-width="0.65" fill="none"/>
<path d="M63.6 432V434.2H103.6V432M73.6 432V434.2M83.6 432V434.2M93.6 432V434.2" stroke="#c2c2c2" stroke-width="0.5" fill="none"/>
<path d="M105.8 421H111.6L109.1 424.4V434.6H108.3V424.4Z" fill="#333"/>
<circle cx="790.6" cy="427" r="1.7" fill="none" stroke="#555" stroke-width="1"/><circle cx="790.6" cy="427" r="2.5" fill="none" stroke="#555" stroke-width="0.7" stroke-dasharray="0.95 1.01"/>
</g>
</svg>
</div>
</body></html>
